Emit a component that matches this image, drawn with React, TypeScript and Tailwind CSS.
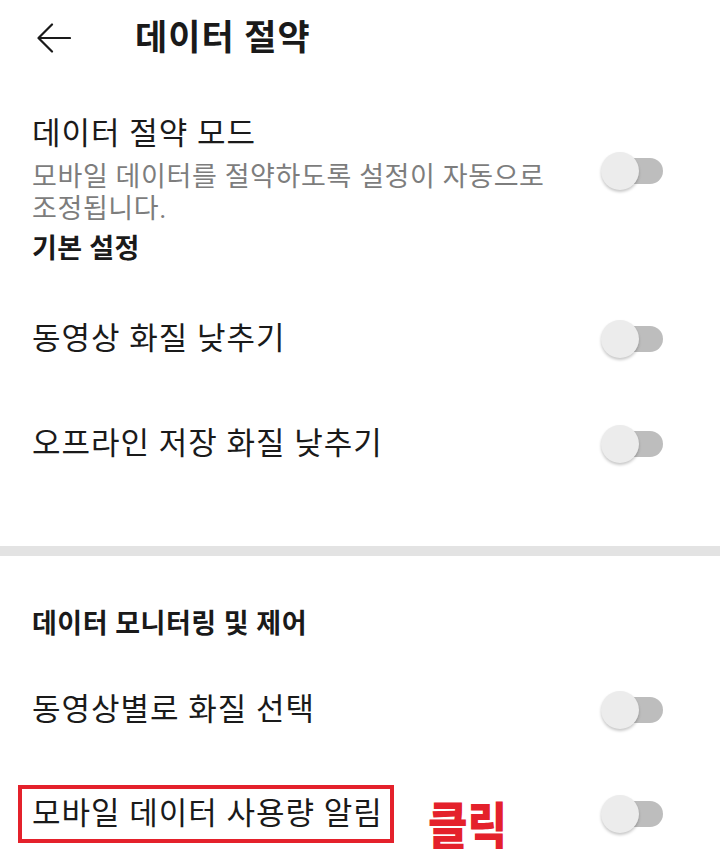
import React from "react";

const FONT = { fontFamily: 'Roboto, "Noto Sans CJK KR", "Noto Sans", sans-serif' };

function Toggle() {
  return (
    <div className="relative w-[62px] h-[38px] shrink-0">
      <div className="absolute right-0 top-[6px] h-[26px] w-[50px] rounded-full bg-[#bdbdbd]" />
      <div className="absolute left-0 top-0 h-[38px] w-[38px] rounded-full bg-[#ececec] shadow-[0_2px_3px_rgba(0,0,0,0.22)]" />
    </div>
  );
}

function Row({ children, h = "h-[105px]" }: { children: React.ReactNode; h?: string }) {
  return (
    <div className={`relative flex items-center justify-between pl-[32px] pr-[57px] ${h}`}>
      {children}
      <Toggle />
    </div>
  );
}

const ITEM = "text-[31px] leading-[36px] tracking-[1px]";

export default function App() {
  return (
    <div className="w-[720px] h-[849px] overflow-hidden bg-white text-[#1a1a1a]" style={FONT}>
      {/* header */}
      <div className="flex items-center h-[76px] pl-[37px]">
        <svg width="34" height="30" viewBox="0 0 34 30" fill="none" stroke="#1a1a1a" strokeWidth="2.2" strokeLinecap="round" strokeLinejoin="round">
          <path d="M33 15H2" />
          <path d="M15 1.5 1.5 15 15 28.5" />
        </svg>
        <div className="ml-[64px] text-[35px] font-bold leading-none tracking-[1px]">데이터 절약</div>
      </div>

      {/* data saver mode */}
      <div className="flex items-center justify-between pl-[32px] pr-[57px] pt-[40px]">
        <div className="w-[520px]">
          <div className={ITEM}>데이터 절약 모드</div>
          <div className="mt-[9px] text-[27px] leading-[32px] tracking-[0.6px] text-[#7d7d7d]">
            모바일 데이터를 절약하도록 설정이 자동으로 조정됩니다.
          </div>
        </div>
        <Toggle />
      </div>
      <div className="pl-[32px] mt-[8px] text-[27px] leading-[32px] font-bold tracking-[0.3px]">기본 설정</div>

      <div className="mt-[21px]">
        <Row>
          <span className={ITEM}>동영상 화질 낮추기</span>
        </Row>
        <Row>
          <span className={ITEM}>오프라인 저장 화질 낮추기</span>
        </Row>
      </div>

      <div className="mt-[50px] h-[10px] w-full bg-[#e3e3e3]" />

      <div className="pl-[32px] mt-[52px] text-[27px] leading-[32px] font-bold tracking-[0.5px]">데이터 모니터링 및 제어</div>

      <div className="mt-[17px]">
        <Row>
          <span className={ITEM}>동영상별로 화질 선택</span>
        </Row>
        <Row h="h-[104px]">
          <span className={`ml-[-14px] border-[4px] border-[#e4212b] pl-[10px] pr-[7px] py-[7px] ${ITEM}`}>
            모바일 데이터 사용량 알림
          </span>
          <span className="absolute left-[428px] top-[40px] text-[43px] leading-none font-black text-[#e4212b] scale-y-120 origin-top">
            클릭
          </span>
        </Row>
      </div>
    </div>
  );
}
